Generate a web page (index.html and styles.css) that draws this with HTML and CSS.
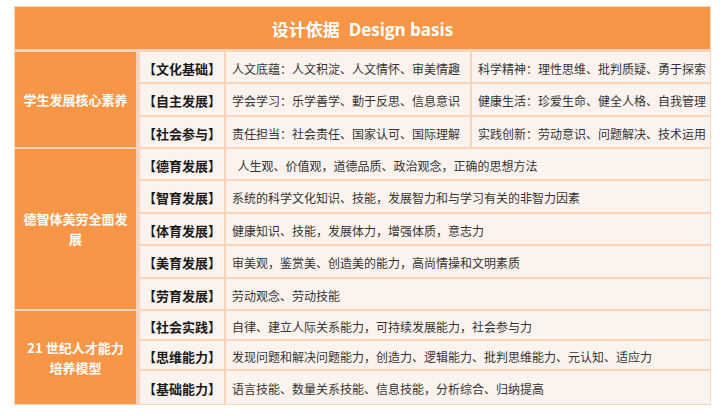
FILE: index.html
```html
<!DOCTYPE html>
<html lang="zh-CN">
<head>
<meta charset="utf-8">
<title>设计依据 Design basis</title>
<link rel="stylesheet" href="styles.css">
</head>
<body>
<div class="table">
  <div class="title">设计依据&nbsp;&nbsp;Design basis</div>

  <div class="group g1">学生发展核心素养</div>
  <div class="label">【文化基础】</div>
  <div class="cell">人文底蕴：人文积淀、人文情怀、审美情趣</div>
  <div class="cell">科学精神：理性思维、批判质疑、勇于探索</div>
  <div class="label">【自主发展】</div>
  <div class="cell">学会学习：乐学善学、勤于反思、信息意识</div>
  <div class="cell">健康生活：珍爱生命、健全人格、自我管理</div>
  <div class="label">【社会参与】</div>
  <div class="cell">责任担当：社会责任、国家认可、国际理解</div>
  <div class="cell">实践创新：劳动意识、问题解决、技术运用</div>

  <div class="group g2">德智体美劳全面发展</div>
  <div class="label">【德育发展】</div>
  <div class="cell wide">&nbsp;&nbsp;人生观、价值观，道德品质、政治观念，正确的思想方法</div>
  <div class="label">【智育发展】</div>
  <div class="cell wide">系统的科学文化知识、技能，发展智力和与学习有关的非智力因素</div>
  <div class="label">【体育发展】</div>
  <div class="cell wide">健康知识、技能，发展体力，增强体质，意志力</div>
  <div class="label">【美育发展】</div>
  <div class="cell wide">审美观，鉴赏美、创造美的能力，高尚情操和文明素质</div>
  <div class="label">【劳育发展】</div>
  <div class="cell wide">劳动观念、劳动技能</div>

  <div class="group g3">21 世纪人才能力培养模型</div>
  <div class="label">【社会实践】</div>
  <div class="cell wide">自律、建立人际关系能力，可持续发展能力，社会参与力</div>
  <div class="label">【思维能力】</div>
  <div class="cell wide">发现问题和解决问题能力，创造力、逻辑能力、批判思维能力、元认知、适应力</div>
  <div class="label">【基础能力】</div>
  <div class="cell wide">语言技能、数量关系技能、信息技能，分析综合、归纳提高</div>
</div>
</body>
</html>
```
FILE: styles.css
```css
html, body {
  background: #ffffff;
}
body {
  margin: 6px 0 0 14px;
  font-family: "Noto Sans CJK SC", "Noto Sans", sans-serif;
}
.table {
  width: 697px;
  box-sizing: border-box;
  padding: 1px;
  background: #f9d4bb;
  display: grid;
  grid-template-columns: 123px 84px 244px 238px;
  grid-template-rows: 43px 30px 31px 30px 30px 31px 30px 31px 30px 28px 28px 33px;
  column-gap: 2px;
  row-gap: 2px;
}
.title {
  grid-column: 1 / 5;
  margin-bottom: 1px;
  background: #f79646;
  color: #ffffff;
  font-family: "Open Sans", "Noto Sans CJK SC", sans-serif;
  font-weight: 700;
  font-size: 17px;
  display: flex;
  align-items: center;
  justify-content: center;
}
.group {
  grid-column: 1;
  margin-right: 2px;
  background: #f79646;
  color: #ffffff;
  font-weight: 700;
  font-size: 13px;
  line-height: 20px;
  text-align: center;
  padding: 0 8px;
  display: flex;
  align-items: center;
  justify-content: center;
}
.g1 { grid-row: 2 / 5; }
.g2 { grid-row: 5 / 10; }
.g3 { grid-row: 10 / 13; }
.label {
  grid-column: 2;
  background: #fdf3ee;
  color: #1a1a1a;
  font-weight: 700;
  font-size: 13px;
  display: flex;
  align-items: center;
  justify-content: center;
  padding-top: 2px;
  white-space: nowrap;
}
.cell {
  background: #fdf3ee;
  color: #333333;
  font-size: 12px;
  display: flex;
  align-items: center;
  padding: 2px 0 0 6px;
  white-space: nowrap;
}
.wide {
  grid-column: 3 / 5;
}
```
